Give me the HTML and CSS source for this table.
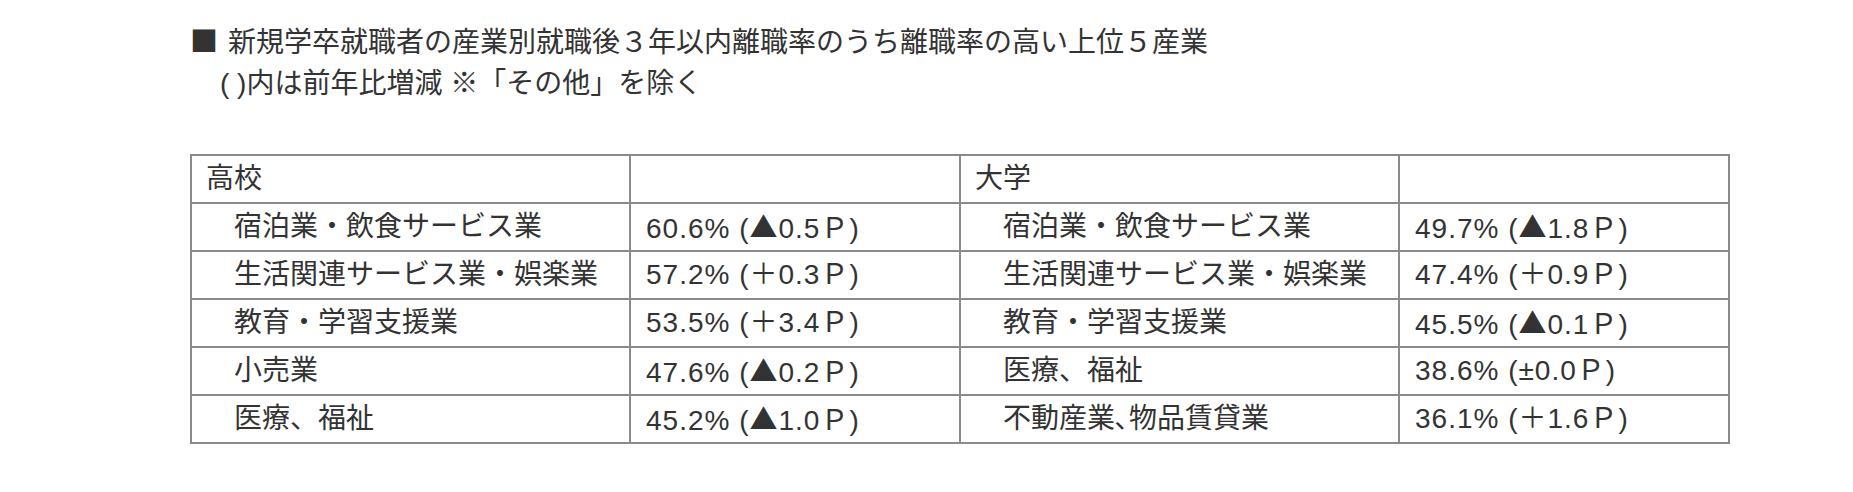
FILE: index.html
```html
<!DOCTYPE html>
<html lang="ja">
<head>
<meta charset="utf-8">
<title>離職率の高い上位５産業</title>
<link rel="stylesheet" href="styles.css">
</head>
<body>
<div class="page">
  <div class="heading">
    <p class="title"><span class="mark">■</span>新規学卒就職者の産業別就職後３年以内離職率のうち離職率の高い上位５産業</p>
    <p class="note">( )内は前年比増減 ※「その他」を除く</p>
  </div>
  <table class="rates">
    <colgroup>
      <col class="c-name"><col class="c-val"><col class="c-name"><col class="c-val">
    </colgroup>
    <tr>
      <td>高校</td><td class="val"></td><td>大学</td><td class="val"></td>
    </tr>
    <tr>
      <td class="ind">宿泊業・飲食サービス業</td><td class="val">60.6% (<span class="tri">▲</span>0.5Ｐ)</td>
      <td class="ind">宿泊業・飲食サービス業</td><td class="val">49.7% (<span class="tri">▲</span>1.8Ｐ)</td>
    </tr>
    <tr>
      <td class="ind">生活関連サービス業・娯楽業</td><td class="val">57.2% (＋0.3Ｐ)</td>
      <td class="ind">生活関連サービス業・娯楽業</td><td class="val">47.4% (＋0.9Ｐ)</td>
    </tr>
    <tr>
      <td class="ind">教育・学習支援業</td><td class="val">53.5% (＋3.4Ｐ)</td>
      <td class="ind">教育・学習支援業</td><td class="val">45.5% (<span class="tri">▲</span>0.1Ｐ)</td>
    </tr>
    <tr>
      <td class="ind">小売業</td><td class="val">47.6% (<span class="tri">▲</span>0.2Ｐ)</td>
      <td class="ind">医療、福祉</td><td class="val">38.6% (±0.0Ｐ)</td>
    </tr>
    <tr>
      <td class="ind">医療、福祉</td><td class="val">45.2% (<span class="tri">▲</span>1.0Ｐ)</td>
      <td class="ind">不動産業､物品賃貸業</td><td class="val">36.1% (＋1.6Ｐ)</td>
    </tr>
  </table>
</div>
</body>
</html>
```

FILE: styles.css
```css
html, body {
  margin: 0;
  padding: 0;
  background: #ffffff;
}

body {
  font-family: "Liberation Sans", "Noto Sans CJK JP", sans-serif;
  font-size: 28px;
  color: #333333;
}

.page {
  padding: 20px 0 0 190px;
}

.heading p {
  margin: 0;
  line-height: 41px;
  white-space: nowrap;
}

.mark {
  font-family: "Noto Sans CJK JP", sans-serif;
  display: inline-block;
  width: 28px;
  margin-right: 10px;
}

.note {
  padding-left: 30px;
}

.rates {
  margin-top: 50px;
  border-collapse: collapse;
  table-layout: fixed;
  width: 1538px;
}

.c-name { width: 439px; }
.c-val { width: 330px; }

.rates td {
  border: 2px solid #8a8a8a;
  height: 46px;
  padding: 0 14px;
  line-height: 30px;
  white-space: nowrap;
  vertical-align: middle;
}

.rates td.ind {
  padding-left: 42px;
}

.rates td.val {
  padding-left: 15px;
  letter-spacing: 1px;
}

.tri {
  font-family: "Noto Sans CJK JP", sans-serif;
}
```
